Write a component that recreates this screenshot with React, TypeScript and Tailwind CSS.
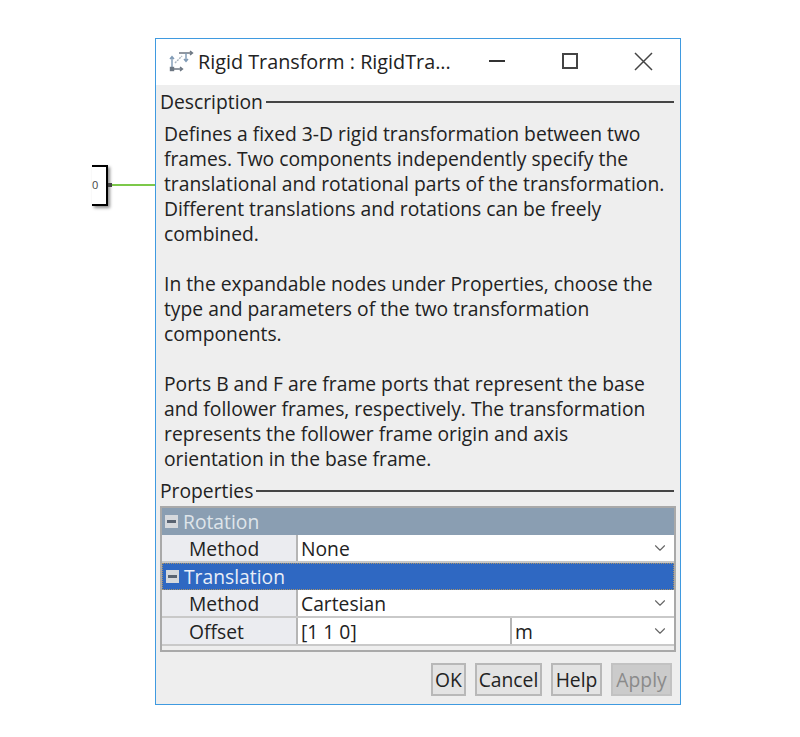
import React from 'react';
import { ChevronDown } from 'lucide-react';

const font = { fontFamily: '"Open Sans", "Noto Sans", sans-serif' };

const Section = ({ title, className }: { title: string; className?: string }) => (
    <div className={`flex items-center h-[25px] gap-[3px] ${className || ''}`}>
        <span className="text-[#222] shrink-0">{title}</span>
        <div className="flex-1 h-[2px] bg-[#444]" />
    </div>
);

const Minus = () => (
    <span className="w-[13px] h-[13px] ml-[3px] mr-[5px] bg-[#d6d9dd] flex items-center justify-center shrink-0">
        <span className="w-[9px] h-[3px] bg-[#5a6472]" />
    </span>
);

const Row = ({ label, children }: { label: string; children: React.ReactNode }) => (
    <div className="flex h-[28px] border-b-2 border-[#c9c9c9]">
        <div className="w-[136px] shrink-0 bg-[#ebecf0] border-r-2 border-[#b5b5b5] pl-[27px] leading-[28px] text-[#222]">{label}</div>
        {children}
    </div>
);

const Select = ({ value, className }: { value: string; className?: string }) => (
    <div className={`flex-1 bg-white flex items-center justify-between pl-[3px] pr-[5px] text-[#222] ${className || ''}`}>
        <span className="leading-[25px]">{value}</span>
        <ChevronDown size={18} strokeWidth={1.5} className="text-[#666]" />
    </div>
);

const Btn = ({ label, w, disabled }: { label: string; w: string; disabled?: boolean }) => (
    <div className={`${w} h-[33px] border-2 flex items-center justify-center ${disabled ? 'bg-[#cbcbcb] border-[#c2c2c2] text-[#8a8a8a]' : 'bg-[#e3e3e3] border-[#b8b8b8] text-[#222]'}`}>{label}</div>
);

export default function App() {
    return (
        <div className="relative w-[800px] h-[737px] bg-white overflow-hidden pt-[38px] pl-[155px]" style={font}>
            {/* block behind the dialog */}
            <div className="absolute left-[92px] top-[165px] w-[16px] h-[41px] bg-white border-t-2 border-r-2 border-b-2 border-black shadow-[2px_2px_3px_rgba(0,0,0,0.45)] flex items-center text-[11px] text-[#444]">0</div>
            <div className="absolute left-[108px] top-[183px] w-[4px] h-[4px] bg-[#444]" />
            <div className="absolute left-[112px] top-[184px] w-[43px] h-[2px] bg-[#7cc84a]" />

            <div className="w-[526px] h-[667px] border border-[#3f9ae0] bg-[#eeeeee] flex flex-col text-[19.3px] leading-[25px]">
                {/* Title bar */}
                <div className="h-[46px] bg-white flex items-center shrink-0 pb-[2px]">
                    <svg width="26" height="24" viewBox="0 0 26 24" className="ml-[12px] mr-[4px]" fill="none" stroke="#6d7783" strokeWidth="1.4">
                        <path d="M2 20 L14 20 M12 18 L14.5 20 L12 22" />
                        <path d="M4 20 L4 8 M2 10 L4 7.5 L6 10" stroke="#7f9ab5" />
                        <path d="M11 4 L24 4 M22 2 L24.5 4 L22 6" />
                        <path d="M18 4 L18 12 M16 10 L18 12.5 L20 10" stroke="#7f9ab5" />
                        <path d="M7 14 L14 7" stroke="#a9b4bf" strokeDasharray="2 1" />
                        <rect x="2.5" y="18.5" width="3" height="3" fill="#6d7783" />
                    </svg>
                    <span className="text-[#222] text-[19.8px]">Rigid Transform : RigidTra...</span>
                    <div className="w-[16px] h-[1.5px] bg-[#333] ml-[38px]" />
                    <div className="w-[16px] h-[16px] border-2 border-[#444] ml-[57px]" />
                    <svg width="21" height="21" viewBox="0 0 21 21" className="ml-[55px]" stroke="#444" strokeWidth="1.5">
                        <path d="M2 2 L19 19 M19 2 L2 19" />
                    </svg>
                </div>

                <div className="flex-1 flex flex-col pl-[4px] pr-[6px]">
                    <Section title="Description" className="mt-[4px]" />
                    <div className="pl-[4px] pt-[7px] text-[#222] h-[364px]">
                        <p>Defines a fixed 3-D rigid transformation between two<br />frames. Two components independently specify the<br />translational and rotational parts of the transformation.<br />Different translations and rotations can be freely<br />combined.</p>
                        <p className="mt-[25px]">In the expandable nodes under Properties, choose the<br />type and parameters of the two transformation<br />components.</p>
                        <p className="mt-[25px]">Ports B and F are frame ports that represent the base<br />and follower frames, respectively. The transformation<br />represents the follower frame origin and axis<br />orientation in the base frame.</p>
                    </div>
                    <Section title="Properties" />

                    {/* Property table */}
                    <div className="mt-[3px] -mr-[2px] h-[146px] border-2 border-[#a9a9a9] bg-[#eeeeee]">
                        <div className="h-[27px] bg-[#8a9eb2] flex items-center text-[#dfe5ea]">
                            <Minus />
                            <span className="leading-[25px]">Rotation</span>
                        </div>
                        <Row label="Method"><Select value="None" /></Row>
                        <div className="h-[27px] bg-[#2f68c2] border border-dotted border-[#a8926a] flex items-center text-[#e8eef8]">
                            <Minus />
                            <span className="leading-[25px]">Translation</span>
                        </div>
                        <Row label="Method"><Select value="Cartesian" /></Row>
                        <Row label="Offset">
                            <div className="w-[214px] bg-white border-r-2 border-[#b5b5b5] pl-[3px] leading-[28px] text-[#222]">[1 1 0]</div>
                            <Select value="m" />
                        </Row>
                    </div>

                    {/* Buttons */}
                    <div className="flex justify-end gap-[9px] mt-[11px] pr-[2px]">
                        <Btn label="OK" w="w-[35px]" />
                        <Btn label="Cancel" w="w-[67px]" />
                        <Btn label="Help" w="w-[51px]" />
                        <Btn label="Apply" w="w-[61px]" disabled />
                    </div>
                </div>
            </div>
        </div>
    );
}
